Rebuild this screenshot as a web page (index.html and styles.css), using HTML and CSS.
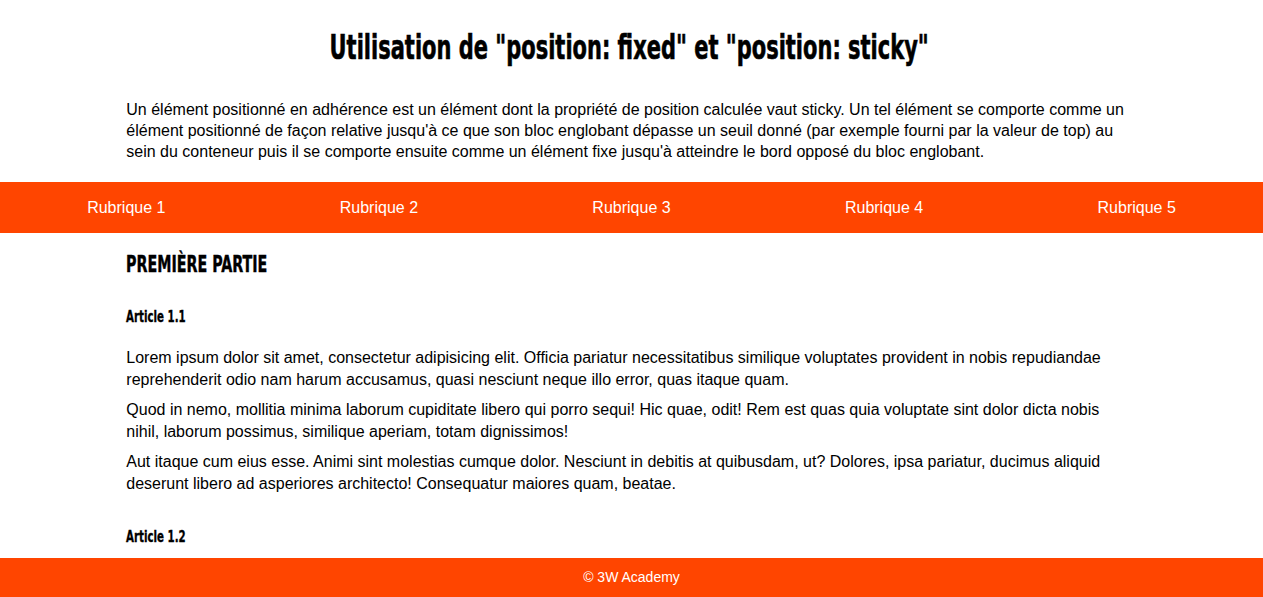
FILE: index.html
```html
<!DOCTYPE html>
<html lang="fr">
<head>
<meta charset="utf-8">
<title>Position fixed et sticky</title>
<link rel="stylesheet" href="styles.css">
</head>
<body>
<header class="site-header">
  <div class="container">
    <h1 class="title">Utilisation de "position: fixed" et "position: sticky"</h1>
    <p class="intro">Un élément positionné en adhérence est un élément dont la propriété de position calculée vaut sticky. Un tel élément se comporte comme un élément positionné de façon relative jusqu'à ce que son bloc englobant dépasse un seuil donné (par exemple fourni par la valeur de top) au sein du conteneur puis il se comporte ensuite comme un élément fixe jusqu'à atteindre le bord opposé du bloc englobant.</p>
  </div>
</header>
<nav class="nav">
  <a class="nav-item" href="#">Rubrique 1</a>
  <a class="nav-item" href="#">Rubrique 2</a>
  <a class="nav-item" href="#">Rubrique 3</a>
  <a class="nav-item" href="#">Rubrique 4</a>
  <a class="nav-item" href="#">Rubrique 5</a>
</nav>
<main class="container">
  <section class="part">
    <h2 class="part-title">Première partie</h2>
    <article class="article">
      <h3 class="article-title">Article 1.1</h3>
      <p class="text">Lorem ipsum dolor sit amet, consectetur adipisicing elit. Officia pariatur necessitatibus similique voluptates provident in nobis repudiandae reprehenderit odio nam harum accusamus, quasi nesciunt neque illo error, quas itaque quam.</p>
      <p class="text">Quod in nemo, mollitia minima laborum cupiditate libero qui porro sequi! Hic quae, odit! Rem est quas quia voluptate sint dolor dicta nobis nihil, laborum possimus, similique aperiam, totam dignissimos!</p>
      <p class="text">Aut itaque cum eius esse. Animi sint molestias cumque dolor. Nesciunt in debitis at quibusdam, ut? Dolores, ipsa pariatur, ducimus aliquid deserunt libero ad asperiores architecto! Consequatur maiores quam, beatae.</p>
    </article>
    <article class="article">
      <h3 class="article-title">Article 1.2</h3>
      <p class="text">Lorem ipsum dolor sit amet, consectetur adipisicing elit. Officia pariatur necessitatibus similique voluptates provident in nobis repudiandae reprehenderit odio nam harum accusamus, quasi nesciunt neque illo error, quas itaque quam.</p>
    </article>
  </section>
</main>
<footer class="footer">© 3W Academy</footer>
</body>
</html>
```

FILE: styles.css
```css
html, body {
  margin: 0;
  padding: 0;
}
body {
  font-family: "Liberation Sans", Arial, sans-serif;
  font-size: 16px;
  color: #000;
  background: #fff;
  overflow: hidden;
}
.container {
  width: 80%;
  margin: 0 auto;
  box-sizing: border-box;
  padding-right: 4px;
}
.title,
.part-title,
.article-title {
  font-family: "DejaVu Sans Condensed", "DejaVu Sans", sans-serif;
  font-weight: 700;
}
.title {
  font-size: 34px;
  line-height: 40px;
  text-align: center;
  margin: 27px 0 0;
  transform: scaleX(0.686);
  -webkit-text-stroke: 0.6px #000;
}
.intro {
  line-height: 21px;
  margin: 32px 0 20px;
}
.nav {
  display: flex;
  height: 51px;
  background: #ff4500;
}
.nav-item {
  flex: 1;
  text-align: center;
  line-height: 51px;
  color: #fff;
  text-decoration: none;
}
.part-title {
  text-transform: uppercase;
  font-size: 23px;
  line-height: 30px;
  margin: 16px 0 28px;
  transform: scaleX(0.69);
  transform-origin: left center;
  -webkit-text-stroke: 0.4px #000;
}
.article-title {
  font-size: 15px;
  line-height: 20px;
  margin: 0 0 20px;
  transform: scaleX(0.76);
  transform-origin: left center;
  -webkit-text-stroke: 0.3px #000;
}
.text {
  line-height: 21.5px;
  margin: 0 0 9px;
}
.article + .article {
  margin-top: 33px;
}
.footer {
  position: fixed;
  left: 0;
  right: 0;
  bottom: 0;
  height: 39px;
  line-height: 39px;
  background: #ff4500;
  color: #fff;
  text-align: center;
  font-size: 14px;
}
```
